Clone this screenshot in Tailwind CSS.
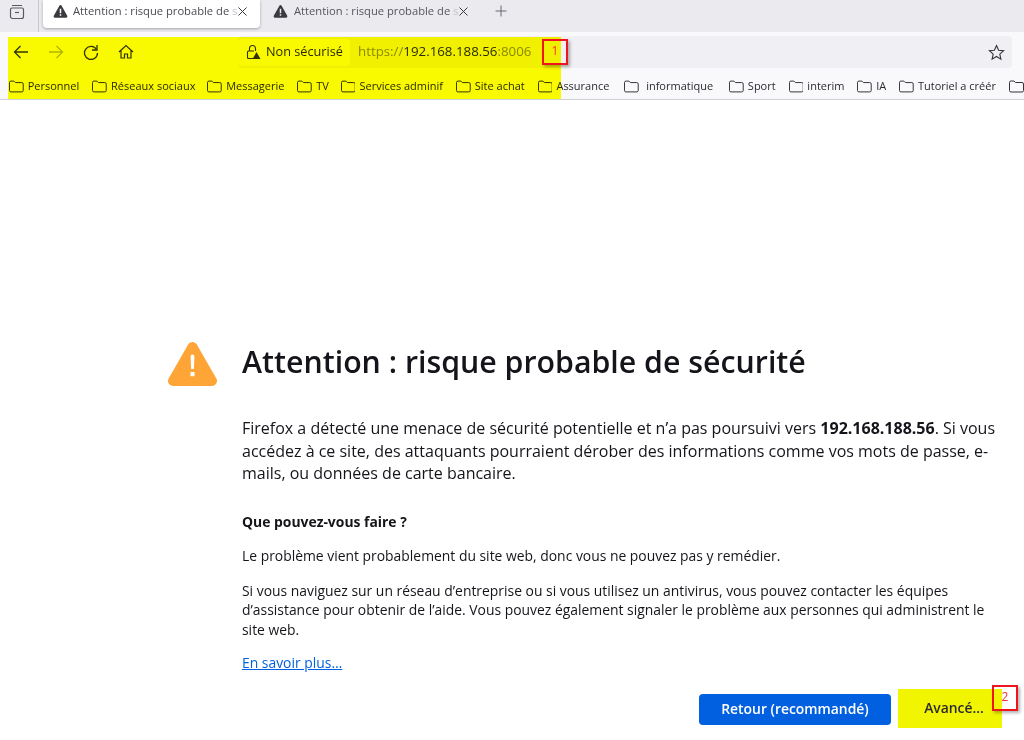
<!DOCTYPE html>
<html lang="fr">
<head>
<meta charset="UTF-8">
<title>Attention : risque probable de sécurité</title>
<script src="https://cdn.jsdelivr.net/npm/@tailwindcss/browser@4"></script>
</head>
<body class="w-[1024px] h-[740px] overflow-hidden bg-white relative font-['Open_Sans','Noto_Sans',sans-serif] text-[#15141a]">

<!-- tab strip -->
<div class="h-8 bg-[#ebebef] flex items-start">
  <div class="w-[39px] h-[32px] flex items-center pl-[9px] pb-[9px] border-r border-[#c8c8cc] mr-[4px]">
    <svg width="16" height="16" viewBox="0 0 16 16" fill="none" stroke="#5b5b66" stroke-width="1.2"><path d="M3 1.500h10M1.500 5.500a1.500 1.500 0 0 1 1.500-1.500h10a1.500 1.500 0 0 1 1.500 1.500v7a2 2 0 0 1-2 2h-9a2 2 0 0 1-2-2z"/><path d="M6 8.500h4"/></svg>
  </div>
  <div class="w-[217px] h-[28px] bg-white rounded-b-[4px] shadow-[0_1px_3px_rgba(0,0,0,0.3)] flex items-center pl-[10px] pb-[6px] text-[11.2px] text-[#4a4a52]">
    <svg class="mr-[5px] shrink-0" width="15" height="14" viewBox="0 0 16 15"><path fill="#3a3a40" d="M8 1c.5 0 .9.3 1.200.8l6 10.800c.5 1-.1 2-1.200 2H2c-1.100 0-1.700-1-1.200-2l6-10.800C7.100 1.300 7.500 1 8 1z"/><path fill="#fff" d="M7.200 5h1.600v5H7.200zM7.200 11h1.600v1.600H7.200z"/></svg>
    <span class="w-[163px] whitespace-nowrap">Attention : risque probable de <span class="text-[#c4c4c8]">s</span></span>
    <svg class="ml-[1px]" width="11" height="11" viewBox="0 0 11 11" stroke="#3a3a40" stroke-width="1"><path d="M1.500 1.500l8 8M9.500 1.500l-8 8"/></svg>
  </div>
  <div class="w-[220px] h-[28px] flex items-center pl-[13px] pb-[6px] text-[11.2px] text-[#55555d]">
    <svg class="mr-[6px] shrink-0" width="15" height="14" viewBox="0 0 16 15"><path fill="#3a3a40" d="M8 1c.5 0 .9.3 1.200.8l6 10.800c.5 1-.1 2-1.200 2H2c-1.100 0-1.700-1-1.200-2l6-10.800C7.100 1.300 7.500 1 8 1z"/><path fill="#ebebef" d="M7.200 5h1.600v5H7.200zM7.200 11h1.600v1.600H7.200z"/></svg>
    <span class="w-[163px] whitespace-nowrap">Attention : risque probable de <span class="text-[#c4c4c8]">s</span></span>
    <svg class="ml-[1px]" width="11" height="11" viewBox="0 0 11 11" stroke="#3a3a40" stroke-width="1"><path d="M1.500 1.500l8 8M9.500 1.500l-8 8"/></svg>
  </div>
  <div class="h-[22px] flex items-center ml-[15px]">
    <svg width="12" height="12" viewBox="0 0 12 12" stroke="#66666e" stroke-width="1"><path d="M6 .5v11M.5 6h11"/></svg>
  </div>
</div>

<!-- toolbar -->
<div class="h-9 bg-[#f9f9fb] flex items-center pl-[13px] pr-[12px] pt-[4px]">
  <svg class="mr-[19px]" width="16" height="16" viewBox="0 0 16 16" fill="none" stroke="#33333a" stroke-width="1.300"><path d="M15 8H1.500M7.500 2l-6 6 6 6"/></svg>
  <svg class="mr-[19px]" width="16" height="16" viewBox="0 0 16 16" fill="none" stroke="#b4b4b8" stroke-width="1.300"><path d="M1 8h13.500M8.500 2l6 6-6 6"/></svg>
  <svg class="mr-[19px]" width="16" height="16" viewBox="0 0 16 16" fill="none" stroke="#33333a" stroke-width="1.300"><path d="M13.500 5.500A6.500 6.500 0 1 0 14.500 9"/><path d="M14 1v5h-5"/></svg>
  <svg class="mr-[104px]" width="16" height="16" viewBox="0 0 16 16" fill="none" stroke="#33333a" stroke-width="1.200"><path d="M1 8l7-6.500L15 8M3 6.500V14h3.500v-4h3v4H13V6.500"/></svg>
  <div class="w-[774px] h-[32px] bg-[#f0f0f4] rounded-[4px] flex items-center">
    <div class="w-[112px] h-[27px] bg-white/60 rounded-[4px] flex items-center pl-[7px] text-[12.7px] text-[#2b2a33]">
      <svg class="mr-[5px]" width="16" height="16" viewBox="0 0 16 16" fill="none"><path stroke="#33333a" stroke-width="1.100" d="M4.500 7V4.500a3 3 0 0 1 6 0V7M8 14.500H3.500a1 1 0 0 1-1-1V8a1 1 0 0 1 1-1H9"/><path fill="#33333a" d="M11.500 8l4 7h-8z"/></svg>
      <span>Non sécurisé</span>
    </div>
    <div class="ml-[8px] w-[181px] whitespace-nowrap text-[13.3px] text-[#8a8a86]">https://<span class="text-[#2b2a33]">192.168.188.56</span>:8006</div>
    <div class="flex-1"></div>
    <svg class="mr-[7px]" width="17" height="17" viewBox="0 0 17 17" fill="none" stroke="#33333a" stroke-width="1.100"><path d="M8.500 1.500l2.100 4.700 5 .5-3.800 3.400 1.100 5-4.400-2.600-4.400 2.600 1.100-5L1.400 6.700l5-.5z"/></svg>
  </div>
</div>

<!-- bookmarks -->
<div class="h-[32px] bg-[#f9f9fb] border-b border-[#cfcfd8] flex items-center pl-[9px] pt-[5px] text-[11px] text-[#2b2a33] whitespace-nowrap">
  <svg class="mr-[4px]" width="15" height="13" viewBox="0 0 15 13" fill="none" stroke="#33333a"><path d="M.5 2.500a1.500 1.500 0 0 1 1.500-1.500h3l1.500 1.500H13a1.500 1.500 0 0 1 1.500 1.500v6.500A1.500 1.500 0 0 1 13 12H2a1.500 1.500 0 0 1-1.500-1.500z"/></svg><span class="mr-[13px]">Personnel</span>
  <svg class="mr-[4px]" width="15" height="13" viewBox="0 0 15 13" fill="none" stroke="#33333a"><path d="M.5 2.500a1.500 1.500 0 0 1 1.500-1.500h3l1.500 1.500H13a1.500 1.500 0 0 1 1.500 1.500v6.500A1.500 1.500 0 0 1 13 12H2a1.500 1.500 0 0 1-1.500-1.500z"/></svg><span class="mr-[12px]">Réseaux sociaux</span>
  <svg class="mr-[4px]" width="15" height="13" viewBox="0 0 15 13" fill="none" stroke="#33333a"><path d="M.5 2.500a1.500 1.500 0 0 1 1.500-1.500h3l1.500 1.500H13a1.500 1.500 0 0 1 1.500 1.500v6.500A1.500 1.500 0 0 1 13 12H2a1.500 1.500 0 0 1-1.500-1.500z"/></svg><span class="mr-[13px]">Messagerie</span>
  <svg class="mr-[4px]" width="15" height="13" viewBox="0 0 15 13" fill="none" stroke="#33333a"><path d="M.5 2.500a1.500 1.500 0 0 1 1.500-1.500h3l1.500 1.500H13a1.500 1.500 0 0 1 1.500 1.500v6.500A1.500 1.500 0 0 1 13 12H2a1.500 1.500 0 0 1-1.500-1.500z"/></svg><span class="mr-[12px]">TV</span>
  <svg class="mr-[4px]" width="15" height="13" viewBox="0 0 15 13" fill="none" stroke="#33333a"><path d="M.5 2.500a1.500 1.500 0 0 1 1.500-1.500h3l1.500 1.500H13a1.500 1.500 0 0 1 1.500 1.500v6.500A1.500 1.500 0 0 1 13 12H2a1.500 1.500 0 0 1-1.500-1.500z"/></svg><span class="mr-[13px]">Services adminif</span>
  <svg class="mr-[4px]" width="15" height="13" viewBox="0 0 15 13" fill="none" stroke="#33333a"><path d="M.5 2.500a1.500 1.500 0 0 1 1.500-1.500h3l1.500 1.500H13a1.500 1.500 0 0 1 1.500 1.500v6.500A1.500 1.500 0 0 1 13 12H2a1.500 1.500 0 0 1-1.500-1.500z"/></svg><span class="mr-[13px]">Site achat</span>
  <svg class="mr-[4px]" width="15" height="13" viewBox="0 0 15 13" fill="none" stroke="#33333a"><path d="M.5 2.500a1.500 1.500 0 0 1 1.500-1.500h3l1.500 1.500H13a1.500 1.500 0 0 1 1.500 1.500v6.500A1.500 1.500 0 0 1 13 12H2a1.500 1.500 0 0 1-1.500-1.500z"/></svg><span class="mr-[15px]">Assurance</span>
  <svg class="mr-[7px]" width="15" height="13" viewBox="0 0 15 13" fill="none" stroke="#33333a"><path d="M.5 2.500a1.500 1.500 0 0 1 1.500-1.500h3l1.500 1.500H13a1.500 1.500 0 0 1 1.500 1.500v6.500A1.500 1.500 0 0 1 13 12H2a1.500 1.500 0 0 1-1.500-1.500z"/></svg><span class="mr-[16px]">informatique</span>
  <svg class="mr-[4px]" width="15" height="13" viewBox="0 0 15 13" fill="none" stroke="#33333a"><path d="M.5 2.500a1.500 1.500 0 0 1 1.500-1.500h3l1.500 1.500H13a1.500 1.500 0 0 1 1.500 1.500v6.500A1.500 1.500 0 0 1 13 12H2a1.500 1.500 0 0 1-1.500-1.500z"/></svg><span class="mr-[13px]">Sport</span>
  <svg class="mr-[4px]" width="15" height="13" viewBox="0 0 15 13" fill="none" stroke="#33333a"><path d="M.5 2.500a1.500 1.500 0 0 1 1.500-1.500h3l1.500 1.500H13a1.500 1.500 0 0 1 1.500 1.500v6.500A1.500 1.500 0 0 1 13 12H2a1.500 1.500 0 0 1-1.500-1.500z"/></svg><span class="mr-[13px]">interim</span>
  <svg class="mr-[4px]" width="15" height="13" viewBox="0 0 15 13" fill="none" stroke="#33333a"><path d="M.5 2.500a1.500 1.500 0 0 1 1.500-1.500h3l1.500 1.500H13a1.500 1.500 0 0 1 1.500 1.500v6.500A1.500 1.500 0 0 1 13 12H2a1.500 1.500 0 0 1-1.500-1.500z"/></svg><span class="mr-[13px]">IA</span>
  <svg class="mr-[4px]" width="15" height="13" viewBox="0 0 15 13" fill="none" stroke="#33333a"><path d="M.5 2.500a1.500 1.500 0 0 1 1.500-1.500h3l1.500 1.500H13a1.500 1.500 0 0 1 1.500 1.500v6.500A1.500 1.500 0 0 1 13 12H2a1.500 1.500 0 0 1-1.500-1.500z"/></svg><span class="mr-[13px]">Tutoriel a créér</span>
  <svg class="shrink-0" width="15" height="13" viewBox="0 0 15 13" fill="none" stroke="#33333a"><path d="M.5 2.500a1.500 1.500 0 0 1 1.500-1.500h3l1.500 1.500H13a1.500 1.500 0 0 1 1.500 1.500v6.500A1.500 1.500 0 0 1 13 12H2a1.500 1.500 0 0 1-1.500-1.500z"/></svg>
</div>

<!-- error page -->
<div class="flex pl-[168px] pt-[242px]">
  <svg class="mr-[25px] mt-[-1px] shrink-0" width="49" height="46" viewBox="0 0 49 46"><path fill="#ffa436" stroke="#ffa436" stroke-width="10" stroke-linejoin="round" d="M24.500 6L44 40H5z"/><path fill="#fff" d="M22.600 15.500a1.900 1.900 0 0 1 3.800 0l-.5 12.500h-2.800zM22.500 31h4v4.200h-4z"/></svg>
  <div class="w-[762px]">
    <h1 class="text-[30.3px] leading-[40px] font-semibold whitespace-nowrap">Attention : risque probable de sécurité</h1>
    <p class="mt-[35px] text-[16px] leading-[22.5px]">Firefox a détecté une menace de sécurité potentielle et n’a pas poursuivi vers <b>192.168.188.56</b>. Si vous accédez à ce site, des attaquants pourraient dérober des informations comme vos mots de passe, e-mails, ou données de carte bancaire.</p>
    <h2 class="mt-[28px] text-[13.9px] leading-[18px] font-bold">Que pouvez-vous faire ?</h2>
    <p class="mt-[15px] text-[13.9px] leading-[20px]">Le problème vient probablement du site web, donc vous ne pouvez pas y remédier.</p>
    <p class="mt-[15px] text-[13.9px] leading-[19.5px]">Si vous naviguez sur un réseau d’entreprise ou si vous utilisez un antivirus, vous pouvez contacter les équipes d’assistance pour obtenir de l’aide. Vous pouvez également signaler le problème aux personnes qui administrent le site web.</p>
    <a class="block mt-[14px] text-[13.9px] leading-[20px] text-[#0060df] underline">En savoir plus…</a>
    <div class="mt-[21px] flex justify-end pr-[2px] gap-[7px]">
      <button class="w-[192px] h-[31px] rounded-[4px] bg-[#0060df] text-white text-[13.9px] font-semibold">Retour (recommandé)</button>
      <button class="relative w-[104px] h-[39px] -mt-[5px] bg-[#f2f500] text-[13.9px] font-semibold text-[#2b2a33] pl-[8px]">Avancé…
        <span class="absolute -right-[16px] -top-[4px] w-[26px] h-[26px] border-2 border-[#f0141e] text-[#ff3030] text-[12px] font-normal leading-[20px] text-center shadow-[2px_2px_3px_rgba(0,0,0,0.3)]">2</span>
      </button>
    </div>
  </div>
</div>

<!-- yellow highlight laid over the toolbar, and the "1" marker -->
<div class="absolute left-[8px] top-[37px] w-[553px] h-[62px] bg-[#ffff00] mix-blend-multiply"></div>
<div class="absolute left-[542px] top-[39px] w-[26px] h-[26px] border-2 border-[#f0141e] text-[#ff3030] text-[12px] leading-[20px] text-center shadow-[2px_2px_3px_rgba(0,0,0,0.3)]">1</div>
</body>
</html>
